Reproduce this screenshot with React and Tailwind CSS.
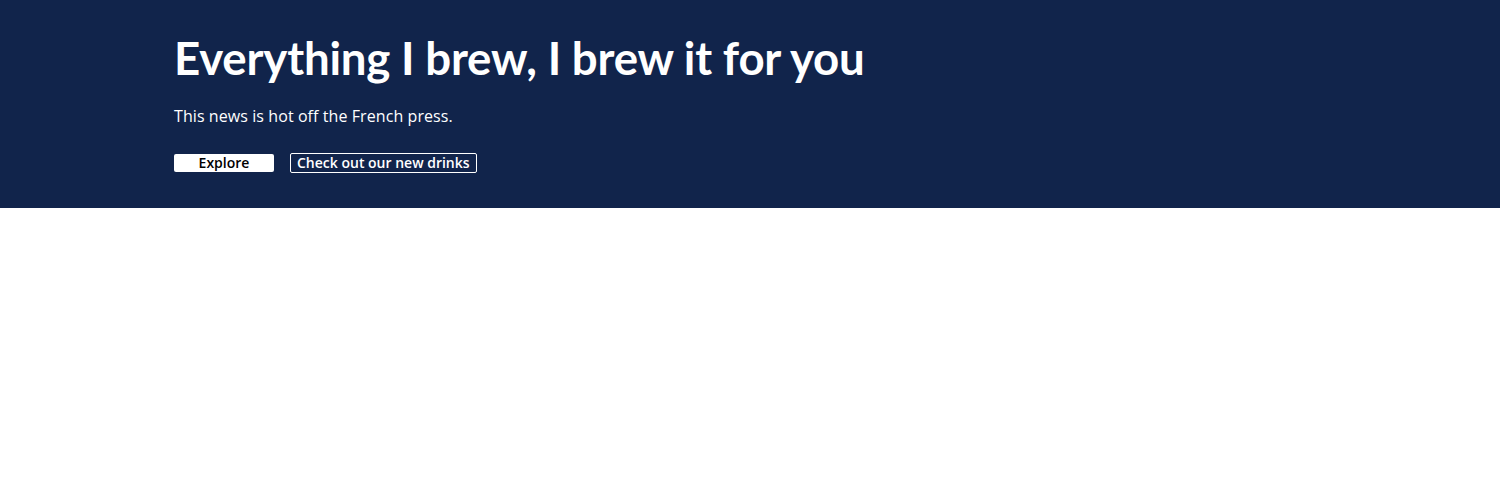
export default function App() {
  return (
    <div className="min-h-[500px] bg-white">
      <section className="bg-[#11244b] h-[208px] pl-[174px] pt-[30px] text-white font-['Open_Sans',sans-serif]">
        <h1 className="font-['Lato',sans-serif] font-bold text-[45.6px] leading-[56px] tracking-[-0.2px]">
          Everything I brew, I brew it for you
        </h1>
        <p className="mt-[18px] text-[16px] leading-[24px] tracking-[0.08px]">This news is hot off the French press.</p>
        <div className="mt-[25px] flex items-center gap-[16px]">
          <button className="w-[100px] h-[18px] bg-white text-black text-[14px] font-semibold leading-[18px] rounded-[2px]">
            Explore
          </button>
          <button className="h-[20px] px-[6px] border border-white text-white text-[14px] font-semibold leading-[18px] rounded-[2px]">
            Check out our new drinks
          </button>
        </div>
      </section>
    </div>
  );
}
